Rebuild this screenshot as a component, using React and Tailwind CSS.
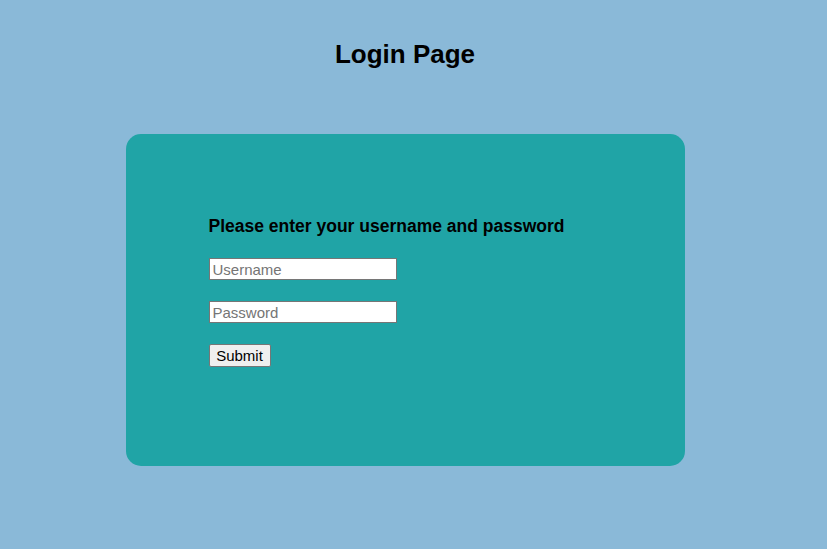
import React from "react";

const App = () => {
  return (
    <div className="min-h-[549px] w-full bg-[#8ab9d8] font-['Liberation_Sans',Arial,sans-serif] text-black">
      <div className="w-[810px]">
        <h1 className="pt-[39px] text-center text-[26px] font-bold leading-[30px]">
          Login Page
        </h1>
        <div className="mx-auto mt-[65px] h-[332px] w-[559px] rounded-[15px] bg-[#20a4a6] pl-[83px] pt-[81px]">
          <h3 className="text-[17.5px] font-bold leading-[22px]">
            Please enter your username and password
          </h3>
          <form className="mt-[21px] flex flex-col items-start gap-[21px]" onSubmit={(e) => e.preventDefault()}>
            <input
              type="text"
              placeholder="Username"
              className="h-[22px] w-[188px] border border-[#767676] bg-white px-[3px] text-[15px] leading-[20px] placeholder:text-[#757575] outline-none"
            />
            <input
              type="password"
              placeholder="Password"
              className="h-[22px] w-[188px] border border-[#767676] bg-white px-[3px] text-[15px] leading-[20px] placeholder:text-[#757575] outline-none"
            />
            <button
              type="submit"
              className="h-[23px] w-[62px] rounded-[2px] border border-[#767676] bg-[#efefef] text-[15px] leading-[20px]"
            >
              Submit
            </button>
          </form>
        </div>
      </div>
    </div>
  );
};

export default App;
